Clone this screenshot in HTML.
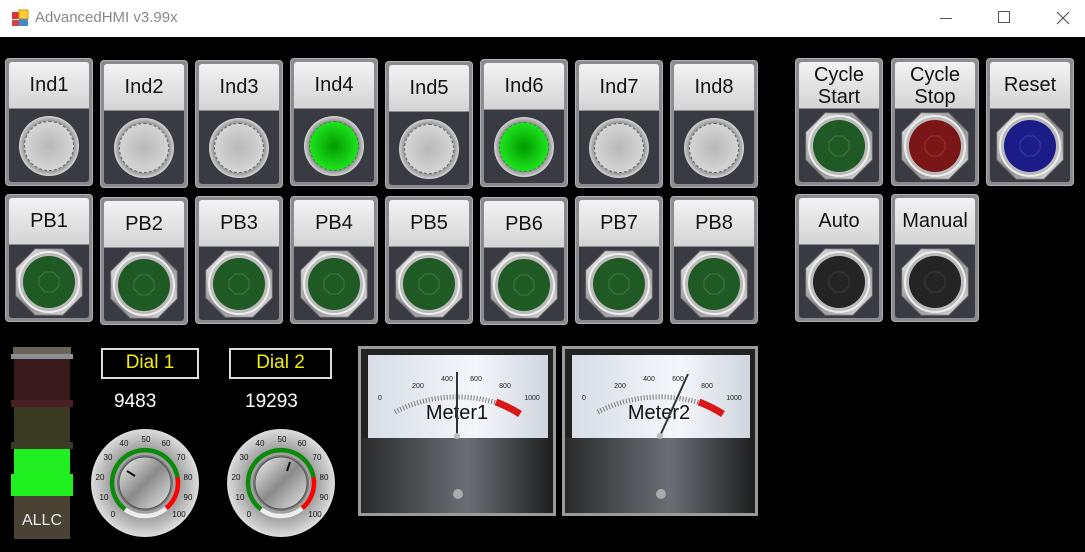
<!DOCTYPE html>
<html><head><meta charset="utf-8"><style>
*{margin:0;padding:0;box-sizing:border-box}
body{width:1085px;height:552px;background:#000;position:relative;overflow:hidden;font-family:"Liberation Sans",sans-serif}
.tb{position:absolute;left:0;top:0;width:1085px;height:37px;background:#fff}
.tb .t{position:absolute;left:35px;top:9px;font-size:15px;color:#888}
.c{position:absolute;width:88px;height:128px;background:#8c8c90;border:1px solid #b0b0b4;border-radius:4px}
.l{position:absolute;left:3px;top:3px;right:3px;height:46px;background:linear-gradient(#f3f3f3,#d4d4d4);border-radius:3px 3px 0 0;font-size:20px;color:#111;text-align:center;line-height:46px}
.l2{line-height:22px;padding-top:2px}
.b{position:absolute;left:3px;top:50px;right:3px;bottom:3px;background:#3a3a42;border-radius:0 0 3px 3px}
.lamp{position:absolute;left:10px;top:7px;width:60px;height:60px;border-radius:50%;background:radial-gradient(circle,#fff 0,#999 60%,#eee 75%,#777 100%)}
.lamp i{position:absolute;left:5px;top:5px;width:50px;height:50px;border-radius:50%;border:1px dashed #666;background:radial-gradient(circle,#b8b8b8,#d8d8d8 80%,#e4e4e4)}
.lamp.g i{background:radial-gradient(circle,#009a00,#1fe81f 75%,#3f3)}
.b svg{position:absolute;left:0;top:0}
.lbl{position:absolute;border:2px solid #ddd;color:#f0f000;font-size:19px;text-align:center;line-height:26px}
.val{position:absolute;color:#fff;font-size:19px}
</style></head><body>
<svg width="0" height="0" style="position:absolute"><defs>
<linearGradient id="sv" x1="0" y1="0" x2="1" y2="1"><stop offset="0" stop-color="#f4f4f4"/><stop offset=".5" stop-color="#8a8a8a"/><stop offset="1" stop-color="#e8e8e8"/></linearGradient>
<radialGradient id="kn"><stop offset="0" stop-color="#eee"/><stop offset=".6" stop-color="#999"/><stop offset="1" stop-color="#ddd"/></radialGradient>
<linearGradient id="dk" x1="0" x2="1"><stop offset="0" stop-color="#2a2a2a"/><stop offset=".55" stop-color="#6a6e74"/><stop offset="1" stop-color="#1e1e1e"/></linearGradient>
<linearGradient id="fc" x1="0" x2="1"><stop offset="0" stop-color="#d8dde6"/><stop offset=".6" stop-color="#f4f6fa"/><stop offset="1" stop-color="#d0d5de"/></linearGradient>
<symbol id="oct" viewBox="0 0 80 74"><polygon points="73.3,50.8 53.8,70.3 26.2,70.3 6.7,50.8 6.7,23.2 26.2,3.7 53.8,3.7 73.3,23.2" fill="url(#sv)" stroke="#666" stroke-width="1"/><circle cx="40" cy="37" r="30" fill="#bbb" stroke="#eee" stroke-width="2"/></symbol>
<symbol id="dial" viewBox="0 0 110 110">
<circle cx="55" cy="55" r="54" fill="url(#kn)"/>
<g font-family="Liberation Sans" font-size="8" text-anchor="middle" fill="#111">
<text x="23" y="89">0</text><text x="14" y="72">10</text><text x="10" y="52">20</text><text x="18" y="32">30</text><text x="34" y="18">40</text><text x="56" y="14">50</text><text x="76" y="18">60</text><text x="91" y="32">70</text><text x="98" y="52">80</text><text x="98" y="72">90</text><text x="89" y="89">100</text></g>
<path d="M35.1 81.4A33 33 0 1 1 87.5 49.3" fill="none" stroke="#0a8a0a" stroke-width="4.5"/>
<path d="M87.5 49.3A33 33 0 0 1 76.2 80.3" fill="none" stroke="#f00" stroke-width="4.5"/>
<path d="M35.1 81.4A33 33 0 0 0 76.2 80.3" fill="none" stroke="#eee" stroke-width="4.5"/>
<circle cx="55" cy="55" r="28" fill="#777"/>
<circle cx="55" cy="55" r="26" fill="url(#sv)" stroke="#555" stroke-width="1"/>
</symbol>
</defs></svg>

<div class="tb">
<svg style="position:absolute;left:11px;top:9px" width="18" height="18"><rect x="1" y="3" width="7" height="7" fill="#d33"/><rect x="8" y="1" width="9" height="9" fill="#fc3" stroke="#c90"/><rect x="1" y="11" width="7" height="6" fill="#c44"/><rect x="8" y="10" width="9" height="7" fill="#48c"/></svg>
<div class="t">AdvancedHMI v3.99x</div>
<div style="position:absolute;left:940px;top:18px;width:12px;height:1px;background:#555"></div>
<div style="position:absolute;left:998px;top:11px;width:12px;height:12px;border:1px solid #555"></div>
<svg style="position:absolute;left:1056px;top:11px" width="14" height="14"><path d="M1 1L13 13M13 1L1 13" stroke="#555" stroke-width="1.2"/></svg>
</div>

<div class="c" style="left:5px;top:58px"><div class="l">Ind1</div><div class="b"><div class="lamp"><i></i></div></div></div>
<div class="c" style="left:100px;top:60px"><div class="l">Ind2</div><div class="b"><div class="lamp"><i></i></div></div></div>
<div class="c" style="left:195px;top:60px"><div class="l">Ind3</div><div class="b"><div class="lamp"><i></i></div></div></div>
<div class="c" style="left:290px;top:58px"><div class="l">Ind4</div><div class="b"><div class="lamp g"><i></i></div></div></div>
<div class="c" style="left:385px;top:61px"><div class="l">Ind5</div><div class="b"><div class="lamp"><i></i></div></div></div>
<div class="c" style="left:480px;top:59px"><div class="l">Ind6</div><div class="b"><div class="lamp g"><i></i></div></div></div>
<div class="c" style="left:575px;top:60px"><div class="l">Ind7</div><div class="b"><div class="lamp"><i></i></div></div></div>
<div class="c" style="left:670px;top:60px"><div class="l">Ind8</div><div class="b"><div class="lamp"><i></i></div></div></div>

<div class="c" style="left:5px;top:194px"><div class="l">PB1</div><div class="b"><svg width="80" height="74"><use href="#oct"/><circle cx="40" cy="37" r="26" fill="#1f5a24"/><polygon points="50,33 44,27 36,27 30,33 30,41 36,47 44,47 50,41" fill="none" stroke="#3a7a3f"/></svg></div></div>
<div class="c" style="left:100px;top:197px"><div class="l">PB2</div><div class="b"><svg width="80" height="74"><use href="#oct"/><circle cx="40" cy="37" r="26" fill="#1f5a24"/><polygon points="50,33 44,27 36,27 30,33 30,41 36,47 44,47 50,41" fill="none" stroke="#3a7a3f"/></svg></div></div>
<div class="c" style="left:195px;top:196px"><div class="l">PB3</div><div class="b"><svg width="80" height="74"><use href="#oct"/><circle cx="40" cy="37" r="26" fill="#1f5a24"/><polygon points="50,33 44,27 36,27 30,33 30,41 36,47 44,47 50,41" fill="none" stroke="#3a7a3f"/></svg></div></div>
<div class="c" style="left:290px;top:196px"><div class="l">PB4</div><div class="b"><svg width="80" height="74"><use href="#oct"/><circle cx="40" cy="37" r="26" fill="#1f5a24"/><polygon points="50,33 44,27 36,27 30,33 30,41 36,47 44,47 50,41" fill="none" stroke="#3a7a3f"/></svg></div></div>
<div class="c" style="left:385px;top:196px"><div class="l">PB5</div><div class="b"><svg width="80" height="74"><use href="#oct"/><circle cx="40" cy="37" r="26" fill="#1f5a24"/><polygon points="50,33 44,27 36,27 30,33 30,41 36,47 44,47 50,41" fill="none" stroke="#3a7a3f"/></svg></div></div>
<div class="c" style="left:480px;top:197px"><div class="l">PB6</div><div class="b"><svg width="80" height="74"><use href="#oct"/><circle cx="40" cy="37" r="26" fill="#1f5a24"/><polygon points="50,33 44,27 36,27 30,33 30,41 36,47 44,47 50,41" fill="none" stroke="#3a7a3f"/></svg></div></div>
<div class="c" style="left:575px;top:196px"><div class="l">PB7</div><div class="b"><svg width="80" height="74"><use href="#oct"/><circle cx="40" cy="37" r="26" fill="#1f5a24"/><polygon points="50,33 44,27 36,27 30,33 30,41 36,47 44,47 50,41" fill="none" stroke="#3a7a3f"/></svg></div></div>
<div class="c" style="left:670px;top:196px"><div class="l">PB8</div><div class="b"><svg width="80" height="74"><use href="#oct"/><circle cx="40" cy="37" r="26" fill="#1f5a24"/><polygon points="50,33 44,27 36,27 30,33 30,41 36,47 44,47 50,41" fill="none" stroke="#3a7a3f"/></svg></div></div>

<div class="c" style="left:795px;top:58px"><div class="l l2">Cycle<br>Start</div><div class="b"><svg width="80" height="74"><use href="#oct"/><circle cx="40" cy="37" r="26" fill="#1f5a24"/><polygon points="50,33 44,27 36,27 30,33 30,41 36,47 44,47 50,41" fill="none" stroke="#3a7a3f"/></svg></div></div>
<div class="c" style="left:891px;top:58px"><div class="l l2">Cycle<br>Stop</div><div class="b"><svg width="80" height="74"><use href="#oct"/><circle cx="40" cy="37" r="26" fill="#7a1616"/><polygon points="50,33 44,27 36,27 30,33 30,41 36,47 44,47 50,41" fill="none" stroke="#a03030"/></svg></div></div>
<div class="c" style="left:986px;top:58px"><div class="l">Reset</div><div class="b"><svg width="80" height="74"><use href="#oct"/><circle cx="40" cy="37" r="26" fill="#1c1c88"/><polygon points="50,33 44,27 36,27 30,33 30,41 36,47 44,47 50,41" fill="none" stroke="#3838a8"/></svg></div></div>
<div class="c" style="left:795px;top:194px"><div class="l">Auto</div><div class="b"><svg width="80" height="74"><use href="#oct"/><circle cx="40" cy="37" r="26" fill="#242424"/><polygon points="50,33 44,27 36,27 30,33 30,41 36,47 44,47 50,41" fill="none" stroke="#383838"/></svg></div></div>
<div class="c" style="left:891px;top:194px"><div class="l">Manual</div><div class="b"><svg width="80" height="74"><use href="#oct"/><circle cx="40" cy="37" r="26" fill="#242424"/><polygon points="50,33 44,27 36,27 30,33 30,41 36,47 44,47 50,41" fill="none" stroke="#383838"/></svg></div></div>

<svg style="position:absolute;left:11px;top:347px" width="62" height="192">
<rect x="2" y="0" width="58" height="10" fill="#6a6458"/><rect x="0" y="7" width="62" height="5" fill="#8a9096"/>
<rect x="3" y="12" width="56" height="43" fill="#3a1a1c"/><rect x="0" y="53" width="62" height="7" fill="#4a2024"/>
<rect x="3" y="60" width="56" height="38" fill="#3a3a22"/><rect x="0" y="95" width="62" height="7" fill="#3c3c26"/>
<rect x="3" y="102" width="56" height="44" fill="#20f020"/><rect x="0" y="127" width="62" height="22" fill="#20f020"/>
<rect x="3" y="149" width="56" height="43" fill="#4a4232"/>
<text x="31" y="178" fill="#eee" font-size="16" text-anchor="middle" font-family="Liberation Sans">ALLC</text>
</svg>

<div class="lbl" style="left:101px;top:348px;width:98px;height:31px">Dial 1</div>
<div class="val" style="left:114px;top:391px">9483</div>
<div class="lbl" style="left:229px;top:348px;width:103px;height:31px">Dial 2</div>
<div class="val" style="left:245px;top:391px">19293</div>

<svg style="position:absolute;left:90px;top:428px" width="110" height="110"><use href="#dial"/><line x1="37" y1="43" x2="45" y2="48" stroke="#111" stroke-width="2"/></svg>
<svg style="position:absolute;left:226px;top:428px" width="110" height="110"><use href="#dial"/><line x1="64" y1="34" x2="61" y2="43" stroke="#111" stroke-width="2"/></svg>

<svg style="position:absolute;left:358px;top:346px" width="198" height="170" font-family="Liberation Sans" text-anchor="middle">
<rect x="0" y="0" width="198" height="170" fill="#9a9a9a"/><rect x="3" y="3" width="192" height="164" fill="#222"/>
<rect x="10" y="9" width="180" height="83" fill="url(#fc)"/>
<rect x="3" y="92" width="192" height="75" fill="url(#dk)"/>
<g font-size="7" fill="#222"><text x="22" y="54">0</text><text x="60" y="42">200</text><text x="89" y="35">400</text><text x="118" y="35">600</text><text x="147" y="42">800</text><text x="174" y="54">1000</text></g>
<path d="M37 66A135 135 0 0 1 161 66" fill="none" stroke="#777" stroke-width="5" stroke-dasharray="1 2"/>
<path d="M138 56A135 135 0 0 1 162 68" fill="none" stroke="#d81818" stroke-width="7"/>
<text x="99" y="73" font-size="20" fill="#111">Meter1</text>
<line x1="99" y1="90" x2="99" y2="26" stroke="#333" stroke-width="2"/>
<circle cx="99" cy="90" r="3" fill="#bbb"/><circle cx="100" cy="148" r="5" fill="#aaa"/>
</svg>
<svg style="position:absolute;left:562px;top:346px" width="196" height="170" font-family="Liberation Sans" text-anchor="middle">
<rect x="0" y="0" width="196" height="170" fill="#9a9a9a"/><rect x="3" y="3" width="190" height="164" fill="#222"/>
<rect x="10" y="9" width="178" height="83" fill="url(#fc)"/>
<rect x="3" y="92" width="190" height="75" fill="url(#dk)"/>
<g font-size="7" fill="#222"><text x="22" y="54">0</text><text x="58" y="42">200</text><text x="87" y="35">400</text><text x="116" y="35">600</text><text x="145" y="42">800</text><text x="172" y="54">1000</text></g>
<path d="M36 66A135 135 0 0 1 160 66" fill="none" stroke="#777" stroke-width="5" stroke-dasharray="1 2"/>
<path d="M137 56A135 135 0 0 1 161 68" fill="none" stroke="#d81818" stroke-width="7"/>
<text x="97" y="73" font-size="20" fill="#111">Meter2</text>
<line x1="98" y1="90" x2="126" y2="28" stroke="#333" stroke-width="2"/>
<circle cx="98" cy="90" r="3" fill="#bbb"/><circle cx="99" cy="148" r="5" fill="#aaa"/>
</svg>
</body></html>
